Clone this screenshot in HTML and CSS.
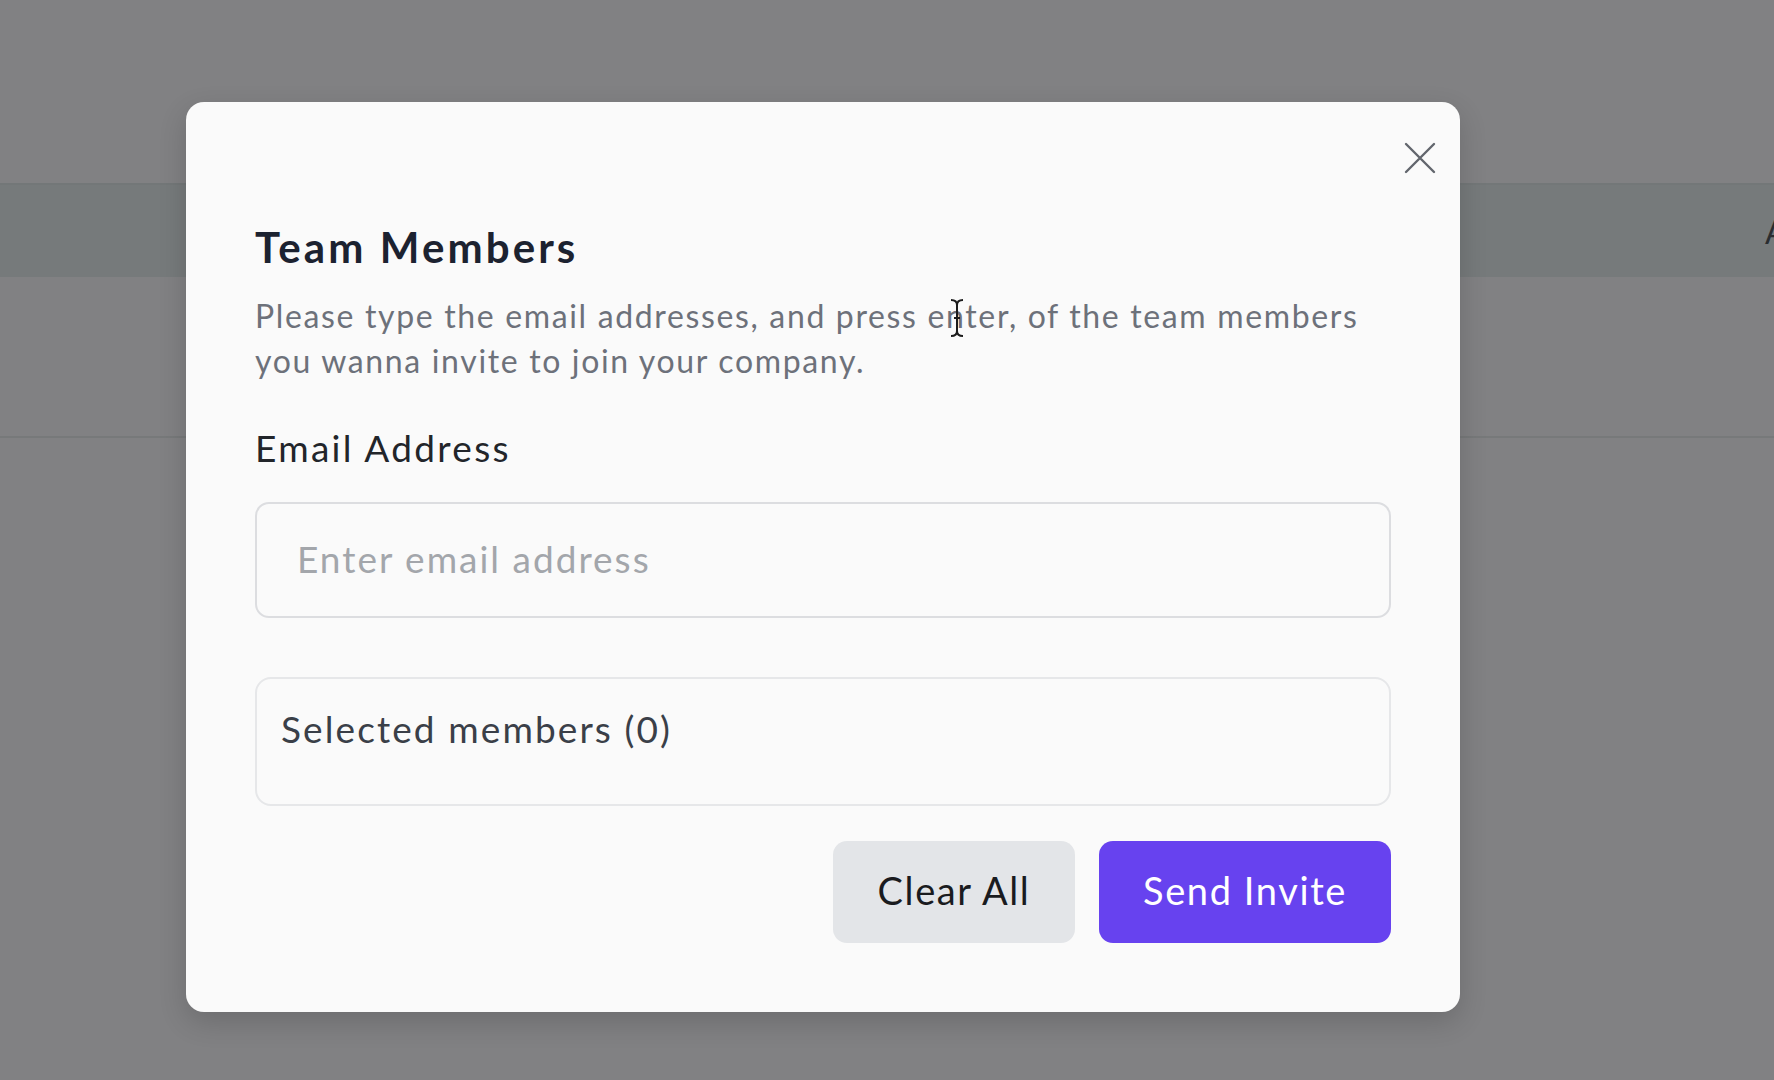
FILE: index.html
```html
<!DOCTYPE html>
<html lang="en">
<head>
<meta charset="utf-8">
<title>Team Members</title>
<link rel="stylesheet" href="styles.css">
</head>
<body>
<div class="page">
  <header class="topbar"></header>
  <div class="table-head"><span class="col-label">A</span></div>
  <div class="table-row"></div>
</div>

<div class="overlay">
  <div class="modal" role="dialog" aria-labelledby="modal-title">
    <button class="close" aria-label="Close">
      <svg width="32" height="32" viewBox="0 0 32 32" fill="none" stroke="#62666d" stroke-width="2.4" stroke-linecap="round"><path d="M2 2 L30 30 M30 2 L2 30"/></svg>
    </button>
    <h2 id="modal-title" class="title">Team Members</h2>
    <p class="desc">Please type the email addresses, and press enter, of the team members you wanna invite to join your company.</p>
    <label class="label" for="email">Email Address</label>
    <input id="email" class="input" type="email" placeholder="Enter email address">
    <div class="selected">Selected members (0)</div>
    <div class="actions">
      <button class="btn btn-clear">Clear All</button>
      <button class="btn btn-send">Send Invite</button>
    </div>
    <svg class="cursor" width="16" height="40" viewBox="0 0 16 40" fill="none" stroke="#1b1b1b" stroke-width="2"><path d="M2 2 Q8 2 8 7 Q8 2 14 2 M8 7 V33 M2 38 Q8 38 8 33 Q8 38 14 38 M5 20 H11"/></svg>
  </div>
</div>
</body>
</html>
```

FILE: styles.css
```css
* { box-sizing: border-box; }
html, body { margin: 0; padding: 0; }
body {
  width: 1774px;
  height: 1080px;
  overflow: hidden;
  background: #818183;
  font-family: "Lato", "Noto Sans", sans-serif;
  position: relative;
}
.page { display: flex; flex-direction: column; }
.topbar { height: 185px; border-bottom: 2px solid #737778; }
.table-head {
  height: 92px;
  background: #767a7b;
  display: flex;
  align-items: center;
  padding-left: 1765px;
  overflow: hidden;
}
.col-label { font-size: 32px; color: #2a2d30; }
.table-row { height: 161px; border-bottom: 2px solid #77797a; }

.overlay { position: absolute; inset: 0; }
.modal {
  position: absolute;
  left: 186px;
  top: 102px;
  width: 1274px;
  height: 910px;
  background: #fafafa;
  border-radius: 18px;
  box-shadow: 0 10px 28px rgba(0,0,0,0.16);
  padding: 120px 69px 69px 69px;
  display: flex;
  flex-direction: column;
}
.close {
  position: absolute;
  right: 24px;
  top: 40px;
  width: 32px;
  height: 32px;
  padding: 0;
  border: 0;
  background: none;
  display: flex;
}
.title {
  margin: 0;
  font-size: 42px;
  line-height: 50px;
  font-weight: 700;
  letter-spacing: 3.1px;
  color: #1c2230;
}
.desc {
  margin: 21px 0 0;
  font-size: 32px;
  line-height: 45px;
  letter-spacing: 1.65px;
  color: #6d717a;
}
.label {
  margin-top: 43px;
  font-size: 37px;
  line-height: 44px;
  letter-spacing: 2.3px;
  color: #22252a;
}
.input {
  margin-top: 32px;
  height: 116px;
  width: 100%;
  border: 2px solid #dcdde0;
  border-radius: 14px;
  background: #fafafa;
  padding: 0 40px 4px;
  font-family: inherit;
  font-size: 37px;
  letter-spacing: 2px;
  color: #22252a;
  outline: none;
}
.input::placeholder { color: #a3a6ab; }
.selected {
  margin-top: 59px;
  height: 129px;
  border: 2px solid #e6e7e9;
  border-radius: 16px;
  padding: 28px 24px 0;
  font-size: 37px;
  line-height: 44px;
  letter-spacing: 2.1px;
  color: #3a3f48;
}
.actions {
  margin-top: 35px;
  display: flex;
  justify-content: flex-end;
  gap: 24px;
}
.btn {
  height: 102px;
  border: 0;
  border-radius: 14px;
  font-family: inherit;
  font-size: 38px;
  letter-spacing: 1.6px;
  padding: 0 0 4px;
}
.btn-clear { width: 242px; background: #e3e5e8; color: #1a1b1e; }
.btn-send { width: 292px; background: #6742ef; color: #ffffff; }
.cursor { position: absolute; left: 763px; top: 196px; }
```
